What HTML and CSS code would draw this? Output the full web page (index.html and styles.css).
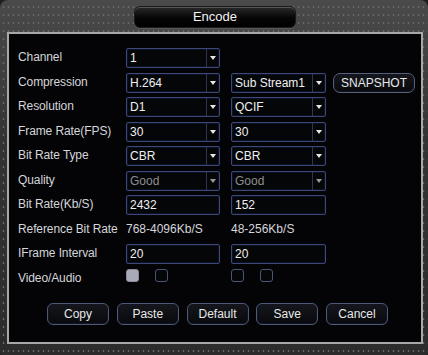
FILE: index.html
```html
<!DOCTYPE html>
<html>
<head>
<meta charset="utf-8">
<link rel="stylesheet" href="styles.css">
</head>
<body>
<div class="window">
  <div class="titlebar">
    <div class="title">Encode</div>
  </div>
  <div class="panel">
    <div class="form">
      <div class="label">Channel</div>
      <div class="select"><span class="val">1</span><span class="arrow"></span></div>
      <div></div><div></div>

      <div class="label">Compression</div>
      <div class="select"><span class="val">H.264</span><span class="arrow"></span></div>
      <div class="select"><span class="val">Sub Stream1</span><span class="arrow"></span></div>
      <div class="btn snap">SNAPSHOT</div>

      <div class="label">Resolution</div>
      <div class="select"><span class="val">D1</span><span class="arrow"></span></div>
      <div class="select"><span class="val">QCIF</span><span class="arrow"></span></div>
      <div></div>

      <div class="label">Frame Rate(FPS)</div>
      <div class="select"><span class="val">30</span><span class="arrow"></span></div>
      <div class="select"><span class="val">30</span><span class="arrow"></span></div>
      <div></div>

      <div class="label">Bit Rate Type</div>
      <div class="select"><span class="val">CBR</span><span class="arrow"></span></div>
      <div class="select"><span class="val">CBR</span><span class="arrow"></span></div>
      <div></div>

      <div class="label">Quality</div>
      <div class="select disabled"><span class="val">Good</span><span class="arrow"></span></div>
      <div class="select disabled"><span class="val">Good</span><span class="arrow"></span></div>
      <div></div>

      <div class="label">Bit Rate(Kb/S)</div>
      <div class="input"><span class="val">2432</span></div>
      <div class="input"><span class="val">152</span></div>
      <div></div>

      <div class="label">Reference Bit Rate</div>
      <div class="ref">768-4096Kb/S</div>
      <div class="ref">48-256Kb/S</div>
      <div></div>

      <div class="label">IFrame Interval</div>
      <div class="input"><span class="val">20</span></div>
      <div class="input"><span class="val">20</span></div>
      <div></div>

      <div class="label">Video/Audio</div>
      <div class="checks"><span class="cb on"></span><span class="cb"></span></div>
      <div class="checks"><span class="cb"></span><span class="cb"></span></div>
      <div></div>
    </div>
    <div class="buttons">
      <div class="btn">Copy</div>
      <div class="btn">Paste</div>
      <div class="btn">Default</div>
      <div class="btn">Save</div>
      <div class="btn">Cancel</div>
    </div>
  </div>
  <div class="bottombar"></div>
</div>
</body>
</html>
```
FILE: styles.css
```css
html, body {
  margin: 0;
  padding: 0;
  background: #1e1e1e;
}
body {
  font-family: "Liberation Sans", Arial, sans-serif;
  font-size: 12px;
}
.window {
  width: 428px;
  height: 355px;
  box-sizing: border-box;
  display: flex;
  flex-direction: column;
  border-radius: 8px 8px 3px 3px;
  background-color: #353535;
  background-image:
    radial-gradient(circle, #6a6a6a 0.7px, transparent 1.2px),
    linear-gradient(#4a4a4a, #333 40%, #2c2c2c);
  background-size: 5px 8px, 100% 100%;
  background-position: 1px 3px, 0 0;
  padding: 0 5px 0 7px;
  overflow: hidden;
}
.titlebar {
  height: 32px;
  display: flex;
  justify-content: center;
  align-items: flex-start;
  padding-top: 6px;
  box-sizing: border-box;
}
.title {
  width: 160px;
  height: 20px;
  border-radius: 6px;
  background: linear-gradient(#2a2a2a, #050505 55%, #000);
  border: 1px solid #1a1a1a;
  box-shadow: inset 0 1px 0 #555, 0 1px 0 #5a5a5a;
  color: #f4f4f4;
  font-size: 13px;
  line-height: 20px;
  text-align: center;
}
.panel {
  flex: none;
  height: 312px;
  box-sizing: border-box;
  border: 2px solid #a8a8a8;
  background: #040406;
  padding: 14px 0 0 9px;
}
.form {
  display: grid;
  grid-template-columns: 97px 94px 95px 78px;
  column-gap: 11px;
  grid-auto-rows: 20px;
  row-gap: 4.5px;
}
.form > :nth-child(4n) {
  margin-left: -4px;
}
.label {
  color: #d4d6da;
  line-height: 18px;
  white-space: nowrap;
  letter-spacing: -0.1px;
}
.select, .input {
  box-sizing: border-box;
  border: 1px solid #3b4878;
  border-radius: 2px;
  background: #050608;
  display: flex;
  align-items: center;
  color: #f0f0f0;
  box-shadow: inset 0 0 0 1px #0d1020;
}
.val {
  flex: 1;
  padding-left: 3px;
  line-height: 18px;
  white-space: nowrap;
  overflow: hidden;
}
.arrow {
  width: 12px;
  height: 18px;
  border-left: 1px solid #2d3550;
  position: relative;
}
.arrow::after {
  content: "";
  position: absolute;
  left: 3px;
  top: 7px;
  border-left: 3px solid transparent;
  border-right: 3px solid transparent;
  border-top: 4px solid #e8e8e8;
}
.disabled {
  color: #8e8e8e;
}
.disabled .arrow::after {
  border-top-color: #9a9a9a;
}
.ref {
  color: #d4d6da;
  line-height: 18px;
  white-space: nowrap;
}
.checks {
  display: flex;
  gap: 16px;
  align-items: flex-start;
}
.cb {
  width: 13px;
  height: 13px;
  box-sizing: border-box;
  border: 1px solid #4a5674;
  border-radius: 3px;
  background: #050608;
}
.cb.on {
  background: #a8aab8;
  border-color: #8a8c9a;
}
.btn {
  box-sizing: border-box;
  height: 21px;
  border: 1px solid #4c5a78;
  border-radius: 6px;
  background: linear-gradient(#15171c, #08090c);
  color: #e8e8e8;
  text-align: center;
  line-height: 19px;
  box-shadow: inset 0 0 0 1px #111420;
}
.snap {
  height: 20px;
  line-height: 18px;
  border-radius: 7px;
  border-color: #55617a;
}
.buttons {
  display: flex;
  gap: 7.75px;
  padding-left: 29px;
  margin-top: 14.5px;
}
.buttons .btn {
  width: 62px;
  height: 22px;
  line-height: 20px;
}
.bottombar {
  flex: 1;
}
```
